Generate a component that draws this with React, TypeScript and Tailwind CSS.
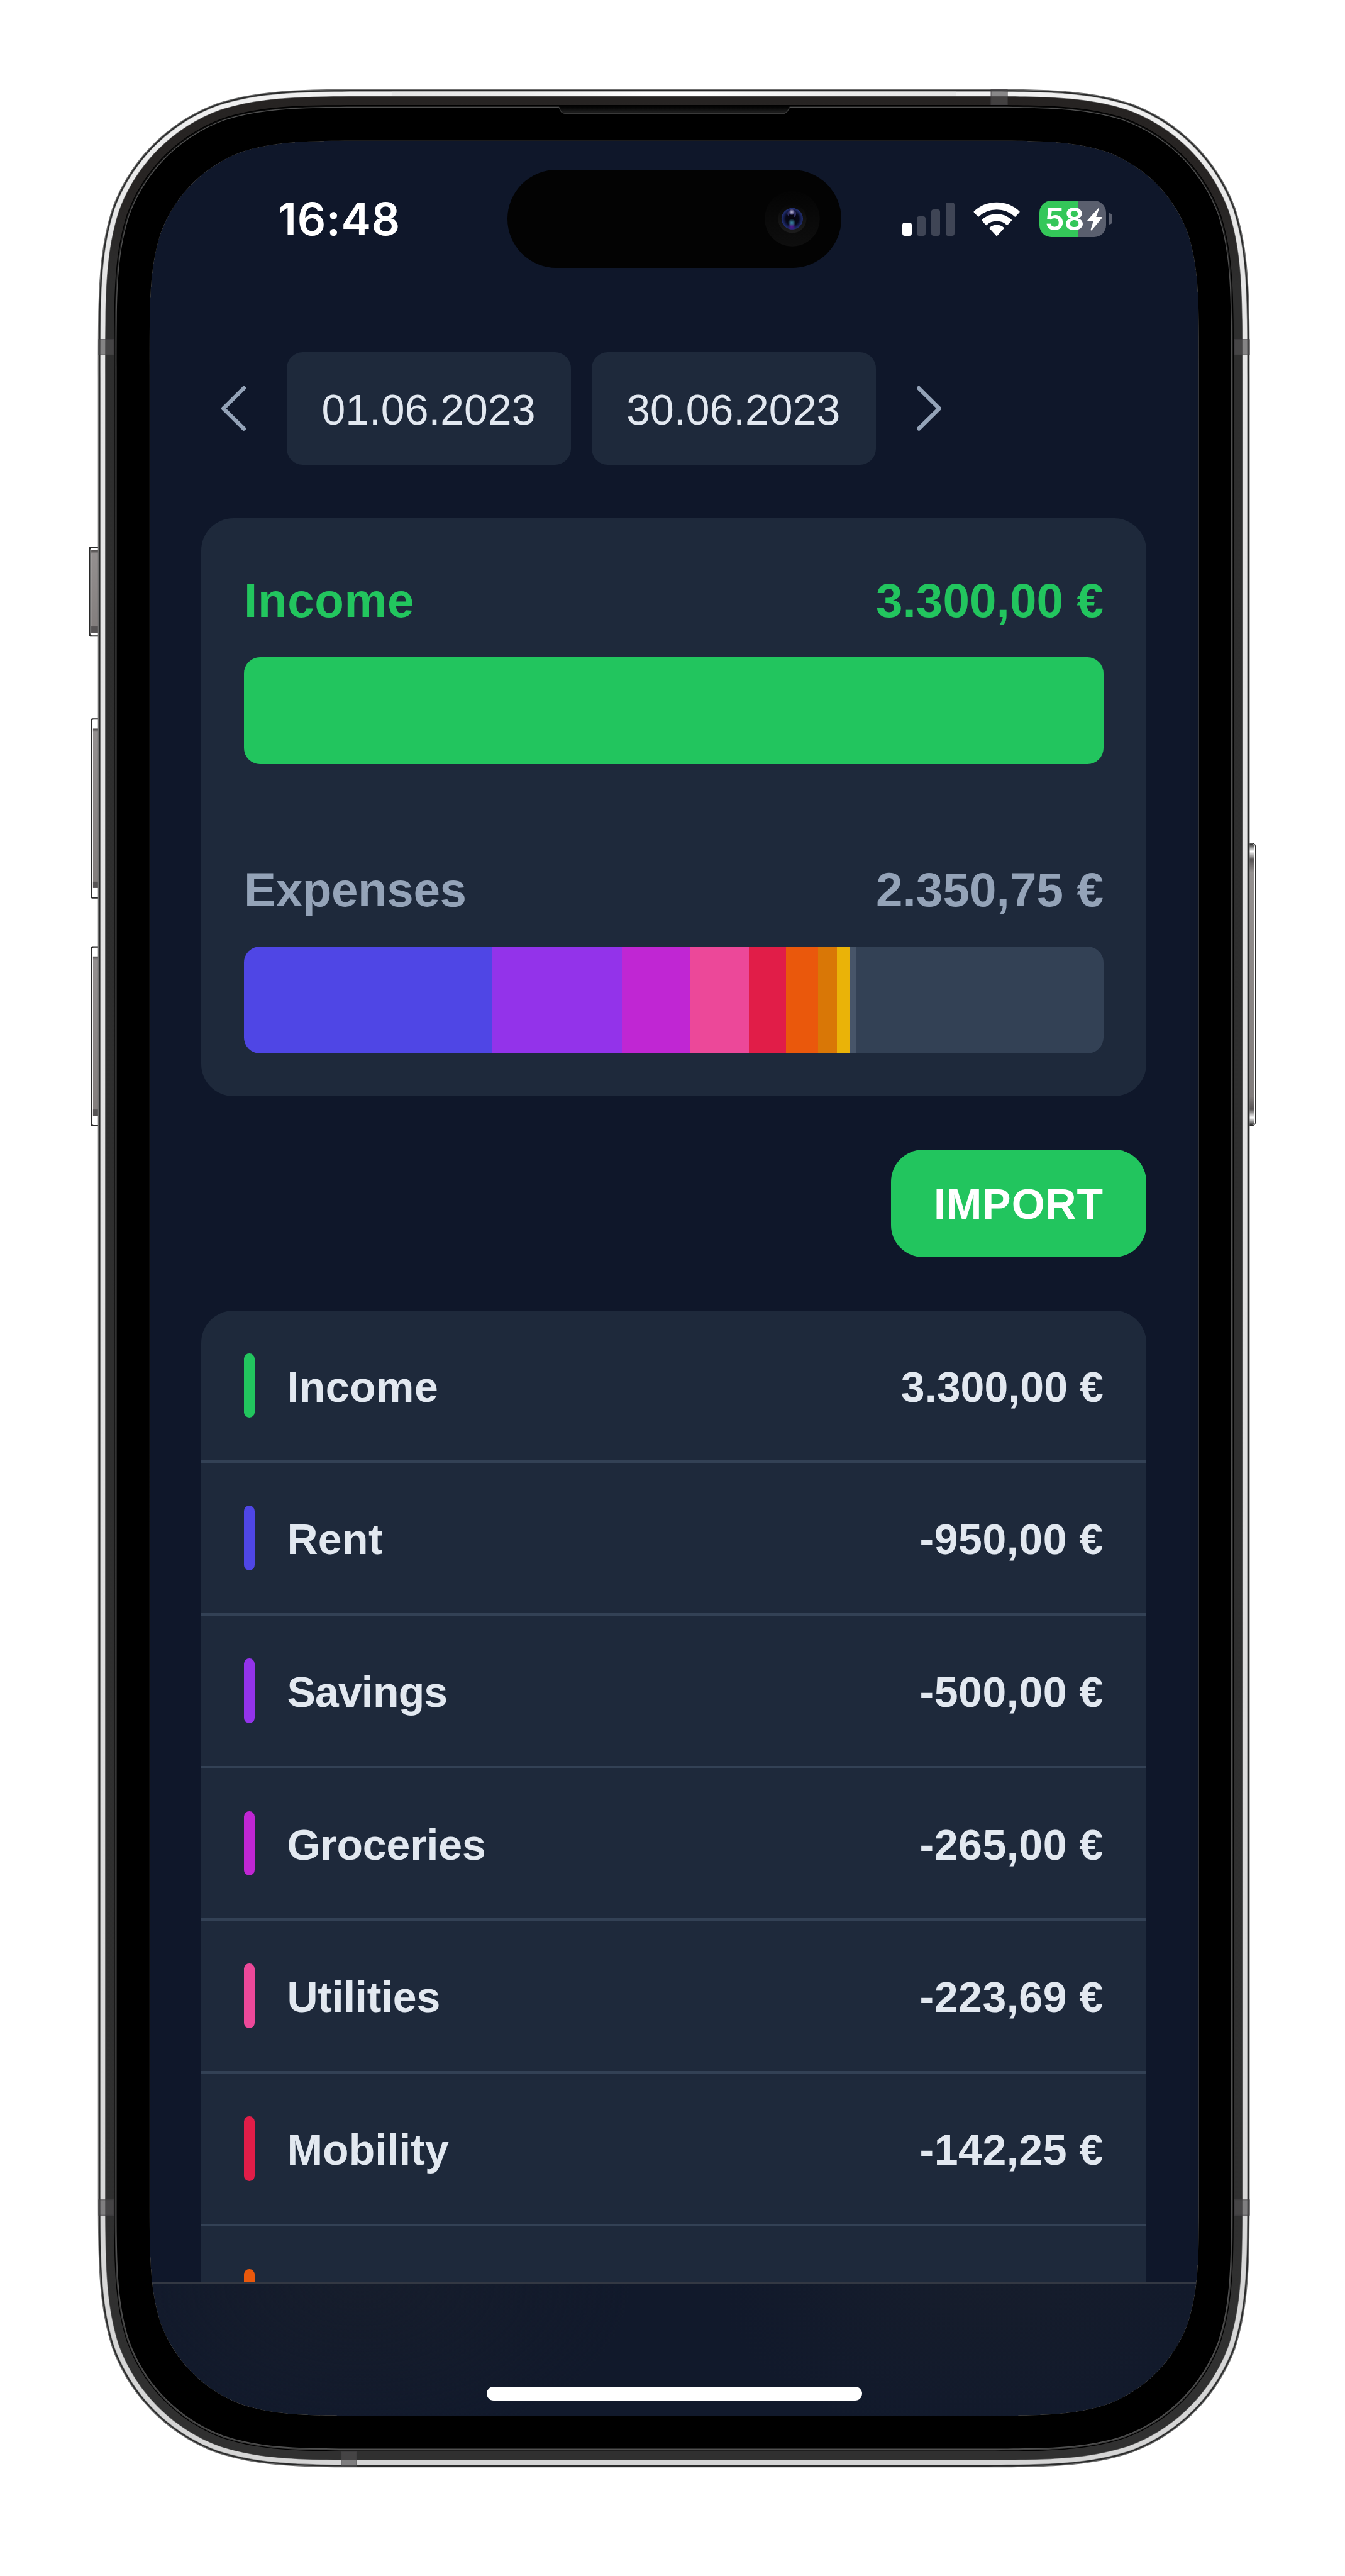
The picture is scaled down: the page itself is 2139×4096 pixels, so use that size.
import React from "react";

const CATEGORIES = [
  { name: "Income", amount: "3.300,00 €", color: "bg-[#22c55e]", nameTracking: "tracking-[0.5px]", amountTracking: "tracking-[0.1px]" },
  { name: "Rent", amount: "-950,00 €", color: "bg-[#4f46e5]", nameTracking: "tracking-[0.4px]", amountTracking: "tracking-[0.6px]" },
  { name: "Savings", amount: "-500,00 €", color: "bg-[#9333ea]", nameTracking: "tracking-[-0.8px]", amountTracking: "tracking-[0.6px]" },
  { name: "Groceries", amount: "-265,00 €", color: "bg-[#c026d3]", nameTracking: "tracking-[-0.1px]", amountTracking: "tracking-[0.6px]" },
  { name: "Utilities", amount: "-223,69 €", color: "bg-[#ec4899]", nameTracking: "tracking-[-0.2px]", amountTracking: "tracking-[0.6px]" },
  { name: "Mobility", amount: "-142,25 €", color: "bg-[#e11d48]", nameTracking: "tracking-[0.1px]", amountTracking: "tracking-[0.6px]" },
  { name: "", amount: "", color: "bg-[#ea580c]", nameTracking: "", amountTracking: "" },
];

const INCOME = 3300;

const SEGMENTS = [
  { value: 950, color: "bg-[#4f46e5]" },
  { value: 500, color: "bg-[#9333ea]" },
  { value: 265, color: "bg-[#c026d3]" },
  { value: 223.69, color: "bg-[#ec4899]" },
  { value: 142.25, color: "bg-[#e11d48]" },
  { value: 123.5, color: "bg-[#ea580c]" },
  { value: 71.3, color: "bg-[#d97706]" },
  { value: 50, color: "bg-[#eab308]" },
  { value: 25, color: "bg-[#475569]" },
];

/** Rounded rectangle with continuous-curvature corners. */
function squircle(x0: number, y0: number, x1: number, y1: number, r: number): string {
  const a = 1.52866 * r;
  const b = 1.08849 * r;
  const c = 0.86841 * r;
  const d = 0.63149 * r;
  const e = 0.07491 * r;
  const f = 0.37282 * r;
  const g = 0.16906 * r;
  return [
    `M${x0 + a} ${y0}`,
    `L${x1 - a} ${y0}`,
    `C${x1 - b} ${y0} ${x1 - c} ${y0} ${x1 - d} ${y0 + e}`,
    `C${x1 - f} ${y0 + g} ${x1 - g} ${y0 + f} ${x1 - e} ${y0 + d}`,
    `C${x1} ${y0 + c} ${x1} ${y0 + b} ${x1} ${y0 + a}`,
    `L${x1} ${y1 - a}`,
    `C${x1} ${y1 - b} ${x1} ${y1 - c} ${x1 - e} ${y1 - d}`,
    `C${x1 - g} ${y1 - f} ${x1 - f} ${y1 - g} ${x1 - d} ${y1 - e}`,
    `C${x1 - c} ${y1} ${x1 - b} ${y1} ${x1 - a} ${y1}`,
    `L${x0 + a} ${y1}`,
    `C${x0 + b} ${y1} ${x0 + c} ${y1} ${x0 + d} ${y1 - e}`,
    `C${x0 + f} ${y1 - g} ${x0 + g} ${y1 - f} ${x0 + e} ${y1 - d}`,
    `C${x0} ${y1 - c} ${x0} ${y1 - b} ${x0} ${y1 - a}`,
    `L${x0} ${y0 + a}`,
    `C${x0} ${y0 + b} ${x0} ${y0 + c} ${x0 + e} ${y0 + d}`,
    `C${x0 + g} ${y0 + f} ${x0 + f} ${y0 + g} ${x0 + d} ${y0 + e}`,
    `C${x0 + c} ${y0} ${x0 + b} ${y0} ${x0 + a} ${y0}Z`,
  ].join("");
}

const ring = (inset: number) =>
  squircle(220 + inset, 200 + inset, 2808 - inset, 5544 - inset, 425 - inset);
const SCREEN = squircle(336, 316, 2694, 5428, 330);

const RINGS: [number, string][] = [
  [0, "#707070"],
  [2, "#2a2b2b"],
  [5, "#8c8c8c"],
  [6, "url(#steel)"],
  [16, "#6b6b6b"],
  [17, "url(#graphite)"],
  [36, "#000000"],
  [38, "url(#seam)"],
  [40, "#505050"],
  [42, "#000000"],
];

const BANDS = [
  { x: 221, y: 762, w: 35, h: 36 },
  { x: 221, y: 4942, w: 35, h: 36 },
  { x: 2773, y: 762, w: 35, h: 36 },
  { x: 2773, y: 4942, w: 35, h: 36 },
  { x: 2226, y: 201, w: 38, h: 35 },
  { x: 766, y: 5508, w: 36, h: 35 },
];

function SideButton({ x, y, w, h, cap }: { x: number; y: number; w: number; h: number; cap: number }) {
  return (
    <g>
      <rect x={x} y={y} width={w + 10} height={h} rx={4} fill="#2a2a2a" />
      <rect x={x + 3} y={y + 3} width={w + 5} height={h - 6} rx={3} fill="#ffffff" />
      <rect x={x + 5} y={y + cap} width={w - 4} height={h - 2 * cap} fill="url(#key)" />
      <rect x={x + 5} y={y + cap - 1} width={w - 4} height={8} fill="url(#keyTop)" />
      <rect x={x + 5} y={y + h - cap - 14} width={w - 4} height={14} fill="#575455" />
    </g>
  );
}

function PhoneFrame() {
  return (
    <svg className="pointer-events-none absolute inset-0 h-[4096px] w-[2139px]" viewBox="0 0 3022 5788" preserveAspectRatio="none">
      <defs>
        <linearGradient id="steelX" x1="0" x2="1" y1="0" y2="0">
          <stop offset="0" stopColor="#e6e6e6" />
          <stop offset="0.2" stopColor="#ececec" />
          <stop offset="0.45" stopColor="#ffffff" />
          <stop offset="0.55" stopColor="#ffffff" />
          <stop offset="0.8" stopColor="#ececec" />
          <stop offset="1" stopColor="#e6e6e6" />
        </linearGradient>
        <linearGradient id="steel" x1="0" x2="0" y1="0" y2="1">
          <stop offset="0" stopColor="#f0f0f0" />
          <stop offset="0.06" stopColor="#e6e6e6" />
          <stop offset="0.5" stopColor="#e2e2e2" />
          <stop offset="1" stopColor="#d5d5d5" />
        </linearGradient>
        <linearGradient id="graphite" x1="0" x2="0" y1="0" y2="1">
          <stop offset="0" stopColor="#262322" />
          <stop offset="0.04" stopColor="#272423" />
          <stop offset="0.08" stopColor="#2e2e2e" />
          <stop offset="1" stopColor="#303030" />
        </linearGradient>
        <linearGradient id="seam" x1="0" x2="0" y1="0" y2="1">
          <stop offset="0" stopColor="#0c0c0c" />
          <stop offset="0.1" stopColor="#2a2a2a" />
          <stop offset="1" stopColor="#3c3c3c" />
        </linearGradient>
        <linearGradient id="key" x1="0" x2="0" y1="0" y2="1">
          <stop offset="0" stopColor="#949090" />
          <stop offset="1" stopColor="#827d7c" />
        </linearGradient>
        <linearGradient id="keyTop" x1="0" x2="0" y1="0" y2="1">
          <stop offset="0" stopColor="#4e4b4b" />
          <stop offset="1" stopColor="#949090" />
        </linearGradient>
        <linearGradient id="rightKey" x1="0" x2="0" y1="1897" y2="2527" gradientUnits="userSpaceOnUse">
          <stop offset="0" stopColor="#3a3a3a" />
          <stop offset="0.025" stopColor="#ffffff" />
          <stop offset="0.055" stopColor="#555252" />
          <stop offset="0.1" stopColor="#959190" />
          <stop offset="0.9" stopColor="#827d7c" />
          <stop offset="0.945" stopColor="#555252" />
          <stop offset="0.975" stopColor="#ffffff" />
          <stop offset="1" stopColor="#3a3a3a" />
        </linearGradient>
        <linearGradient id="speaker" x1="0" x2="0" y1="0" y2="1">
          <stop offset="0" stopColor="#000000" />
          <stop offset="0.35" stopColor="#080808" />
          <stop offset="0.75" stopColor="#1b1b1b" />
          <stop offset="1" stopColor="#1b1b1b" />
        </linearGradient>
      </defs>

      <SideButton x={200} y={1228.5} w={20} h={202} cap={9} />
      <SideButton x={204} y={1614} w={16} h={405} cap={24} />
      <SideButton x={204} y={2126} w={16} h={405} cap={24} />
      <rect x="2796" y="1894" width="26" height="636" rx="9" fill="#2a2a2a" />
      <rect x="2796" y="1896" width="24" height="632" rx="6" fill="#ffffff" />
      <rect x="2796" y="1896" width="22" height="632" rx="5" fill="url(#rightKey)" />

      {RINGS.map(([inset, fill]) => (
        <path key={inset} d={ring(inset) + SCREEN} fillRule="evenodd" fill={fill} />
      ))}
      <rect x="880" y="206" width="1268" height="10" fill="url(#steelX)" />

      {BANDS.map((b) => (
        <g key={`${b.x}-${b.y}`}>
          <rect x={b.x} y={b.y} width={b.w} height={b.h} fill="#525052" fillOpacity="0.65" />
          <rect x={b.x + 0.75} y={b.y + 0.75} width={b.w - 1.5} height={b.h - 1.5} fill="none" stroke="#3c3b3e" strokeOpacity="0.6" strokeWidth="1.5" />
        </g>
      ))}

      <path d="M1256 236H1774V241C1770 250 1767 256 1758 256H1270C1262 256 1259 250 1256 241Z" fill="url(#speaker)" />
      <path d="M1256 241C1259 250 1262 255 1270 255H1758C1767 255 1770 250 1774 241" fill="none" stroke="#393939" strokeWidth="2" />
    </svg>
  );
}

function DynamicIsland() {
  return (
    <div className="h-[155.7px] w-[530.8px] shrink-0 rounded-full bg-[#030303]">
      <svg className="h-full w-full" viewBox="0 0 750 220">
        <defs>
          <linearGradient id="camOuter" x1="0" x2="0" y1="0" y2="1">
            <stop offset="0" stopColor="#040404" />
            <stop offset="1" stopColor="#0e0e0e" />
          </linearGradient>
          <linearGradient id="camMid" x1="0" x2="0" y1="0" y2="1">
            <stop offset="0" stopColor="#070707" />
            <stop offset="1" stopColor="#1c1c1c" />
          </linearGradient>
          <radialGradient id="lens">
            <stop offset="0" stopColor="#04040c" />
            <stop offset="0.6" stopColor="#070818" />
            <stop offset="0.85" stopColor="#182258" />
            <stop offset="1" stopColor="#223074" />
          </radialGradient>
          <radialGradient id="shine">
            <stop offset="0" stopColor="#c4c2da" />
            <stop offset="0.5" stopColor="#77739f" />
            <stop offset="1" stopColor="#2b2a5c" />
          </radialGradient>
          <radialGradient id="teal">
            <stop offset="0" stopColor="#3d8fb0" />
            <stop offset="1" stopColor="#3d8fb0" stopOpacity="0" />
          </radialGradient>
          <radialGradient id="violet">
            <stop offset="0" stopColor="#5a1a9a" />
            <stop offset="1" stopColor="#5a1a9a" stopOpacity="0" />
          </radialGradient>
        </defs>
        <circle cx="640" cy="110" r="62" fill="url(#camOuter)" />
        <circle cx="640" cy="110" r="32" fill="url(#camMid)" />
        <circle cx="640" cy="110" r="24" fill="url(#lens)" />
        <ellipse cx="639" cy="99" rx="10" ry="9" fill="#2b2a5c" />
        <circle cx="638.500" cy="104" r="6" fill="#050510" />
        <circle cx="639" cy="95" r="6.500" fill="url(#shine)" />
        <circle cx="639" cy="127" r="9" fill="url(#violet)" />
        <circle cx="639" cy="119" r="9" fill="url(#teal)" />
      </svg>
    </div>
  );
}

function SignalIcon() {
  return (
    <div className="ml-[97.9px] flex h-[53px] shrink-0 items-end gap-[8.6px]">
      <div className="h-[20.6px] w-[14.2px] rounded-[4px] bg-white" />
      <div className="h-[30.4px] w-[14.2px] rounded-[4px] bg-[#3f4555]" />
      <div className="h-[41.9px] w-[14.2px] rounded-[4px] bg-[#3f4555]" />
      <div className="h-[53px] w-[14.2px] rounded-[4px] bg-[#3f4555]" />
    </div>
  );
}

/** Slice of a disc around (51, 75) reaching 43 degrees to either side. */
function sector(outer: number, inner: number): string {
  const s = Math.sin((43 * Math.PI) / 180);
  const c = Math.cos((43 * Math.PI) / 180);
  const p = (r: number, side: number) => `${51 + side * r * s} ${75 - r * c}`;
  const back = inner > 0 ? `L${p(inner, 1)}A${inner} ${inner} 0 0 0 ${p(inner, -1)}` : "L51 75";
  return `M${p(outer, -1)}A${outer} ${outer} 0 0 1 ${p(outer, 1)}${back}Z`;
}

function WifiIcon() {
  return (
    <svg className="ml-[31.4px] h-[53.1px] w-[72.2px] shrink-0 overflow-visible" viewBox="0 0 102 75">
      <g fill="#fff" stroke="#fff" strokeWidth="2.5" strokeLinejoin="round">
        <path d={sector(74, 60.5)} />
        <path d={sector(48, 34.5)} />
        <path d={sector(22.5, 0)} transform="translate(0 -1)" />
      </g>
    </svg>
  );
}

function BatteryIcon() {
  return (
    <div className="ml-[31.2px] flex shrink-0 items-center gap-[4.6px]">
      <div className="flex h-[58.6px] w-[106.3px] items-center overflow-hidden rounded-[19px] bg-[linear-gradient(90deg,#34c759_57.7%,#5a5f6e_57.7%)] pl-[8.5px]">
        <span className="w-[66.5px] font-['Inter'] text-[50px] leading-none font-semibold tracking-[-0.3px] text-white">58</span>
        <svg className="h-[37px] w-[25.5px] shrink-0" viewBox="0 0 36 52">
          <path d="M26 1.5L2 28.5Q1 31 4 31H15L9 50.500Q10.500 52 12 50.500L34.500 23.500Q35.500 21 33 21H21.500L28 3Q28 0.500 26 1.500Z" fill="#fff" />
        </svg>
      </div>
      <div className="h-[17.3px] w-[5.4px] rounded-r-full bg-[#5a5f6e]" />
    </div>
  );
}

function StatusBar() {
  return (
    <div className="flex h-[249.1px] shrink-0 items-center">
      <div className="w-[569px] shrink-0 pt-[2px] pl-[204px] font-['Inter'] text-[71.3px] leading-none font-semibold tracking-[0.7px] text-white">16:48</div>
      <DynamicIsland />
      <SignalIcon />
      <WifiIcon />
      <BatteryIcon />
    </div>
  );
}

function Chevron({ right }: { right?: boolean }) {
  return (
    <svg className="h-[70.8px] w-[39px] shrink-0" viewBox="0 0 55 100" fill="none" stroke="#94a3b8" strokeWidth="9" strokeLinecap="round" strokeLinejoin="round">
      <path d={right ? "M4.500 4.500L50.500 50L4.500 95.500" : "M50.500 4.500L4.500 50L50.500 95.500"} />
    </svg>
  );
}

function DateField({ value }: { value: string }) {
  return (
    <div className="flex h-[178.6px] w-[451.900px] items-center justify-center rounded-[25.500px] bg-[#1e293b] pt-[5px] pr-[2px] text-[67.940px] text-[#e2e8f0]">
      {value}
    </div>
  );
}

function Heading({ label, amount, color, tracking }: { label: string; amount: string; color: string; tracking: string }) {
  return (
    <div className={`flex h-[118.900px] items-center justify-between pt-[8px] text-[76.400px] font-bold ${color}`}>
      <span className={tracking}>{label}</span>
      <span className="tracking-[0.1px]">{amount}</span>
    </div>
  );
}

export default function App() {
  return (
    <div className="relative h-[4096px] w-[2139px] overflow-hidden bg-white pt-[223.6px] pl-[237.8px] font-['Liberation_Sans',sans-serif]">
      <main className="flex h-[3617.8px] w-[1669px] flex-col overflow-hidden rounded-[200px] bg-[#0f172a]">
        <StatusBar />

        <div className="mt-[87.3px] flex shrink-0 items-center pl-[113.900px]">
          <Chevron />
          <div className="mr-[65.3px] ml-[65.8px] flex gap-[32.900px]">
            <DateField value="01.06.2023" />
            <DateField value="30.06.2023" />
          </div>
          <Chevron right />
        </div>

        <section className="mt-[85.1px] ml-[82.3px] flex w-[1502.900px] shrink-0 flex-col rounded-[51px] bg-[#1e293b] p-[68px]">
          <Heading label="Income" amount="3.300,00 €" color="text-[#22c55e]" tracking="tracking-[0.6px]" />
          <div className="mt-[34.3px] h-[170.600px] rounded-[25.500px] bg-[#22c55e]" />
          <div className="mt-[136.200px]">
            <Heading label="Expenses" amount="2.350,75 €" color="text-[#94a3b8]" tracking="tracking-[-0.4px]" />
          </div>
          <div className="mt-[34px] flex h-[170.600px] overflow-hidden rounded-[25.500px] bg-[#334155]">
            {SEGMENTS.map((s) => (
              <div key={s.color} className={`shrink-0 ${s.color}`} style={{ width: `${(s.value / INCOME) * 100}%` }} />
            ))}
          </div>
        </section>

        <div className="mt-[85px] ml-[82.3px] flex w-[1502.900px] shrink-0 justify-end">
          <button className="flex h-[170.400px] w-[406px] items-center justify-center rounded-[51px] bg-[#22c55e] pt-[4px] text-[67.940px] font-bold tracking-[1px] text-white">
            IMPORT
          </button>
        </div>

        <div className="mt-[85.1px] ml-[82.3px] min-h-0 w-[1502.900px] flex-1 overflow-hidden rounded-t-[51px] bg-[#1e293b]">
          {CATEGORIES.map((c, i) => (
            <div key={i} className="flex h-[242.7px] items-center border-b-[4px] border-[#334155] px-[68px] text-[67.940px] font-bold text-[#e2e8f0]">
              <div className={`h-[102.6px] w-[17px] rounded-full ${c.color}`} />
              <span className={`ml-[51.300px] pt-[5px] ${c.nameTracking}`}>{c.name}</span>
              <span className={`ml-auto pt-[5px] ${c.amountTracking}`}>{c.amount}</span>
            </div>
          ))}
        </div>

        <div className="flex h-[212.3px] shrink-0 items-end justify-center border-t-[2px] border-[#333843] bg-[#11192b] bg-[radial-gradient(ellipse_430px_260px_at_20%_0%,#161d2c,transparent),radial-gradient(ellipse_430px_260px_at_80%_0%,#161d2c,transparent)] pb-[24.3px]">
          <div className="h-[22px] w-[596.700px] rounded-full bg-white" />
        </div>
      </main>
      <PhoneFrame />
    </div>
  );
}
